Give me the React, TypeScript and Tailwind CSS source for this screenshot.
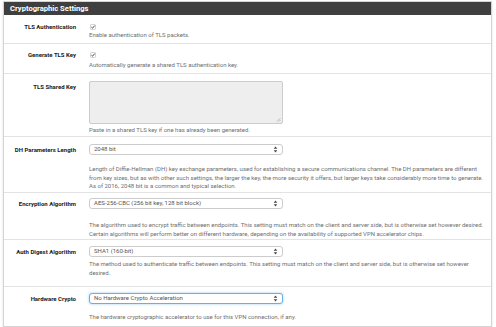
import React from 'react'

const font = { fontFamily: 'Roboto, "Liberation Sans", sans-serif' }

const Check = () => (
  <svg width="6" height="6" viewBox="0 0 6 6" className="block">
    <rect x="0.5" y="0.5" width="5" height="5" rx="0.8" fill="#fff" stroke="#b5b5b5" strokeWidth="0.6" />
    <path d="M1.4 3.1 L2.5 4.2 L4.7 1.6" fill="none" stroke="#333" strokeWidth="0.9" />
  </svg>
)

const Arrows = () => (
  <svg width="5" height="7" viewBox="0 0 5 7" className="block">
    <path d="M2.5 0.6 L4.3 2.8 H0.7 Z" fill="#444" />
    <path d="M2.5 6.4 L4.3 4.2 H0.7 Z" fill="#444" />
  </svg>
)

const Select = ({ value, focused }: { value: string; focused?: boolean }) => (
  <div
    className={
      focused
        ? 'flex h-[11px] w-[194px] items-center justify-between rounded-[3px] border border-[#66afe9] bg-white pl-[4px] pr-[4px] text-[6px] text-[#555] shadow-[0_0_3px_rgba(102,175,233,0.6)]'
        : 'flex h-[11px] w-[194px] items-center justify-between rounded-[3px] border border-[#ccc] bg-white pl-[4px] pr-[4px] text-[6px] text-[#555]'
    }
  >
    <span>{value}</span>
    <Arrows />
  </div>
)

const Row = ({
  label,
  h,
  pt,
  last,
  children,
}: {
  label: string
  h: string
  pt: string
  last?: boolean
  children: React.ReactNode
}) => (
  <div className={`flex ${h} ${pt} ${last ? '' : 'border-b border-[#e3e3e3]'}`}>
    <div className="flex h-[11px] w-[72px] shrink-0 items-center justify-end text-[6px] font-bold text-[#1a1a1a]">
      {label}
    </div>
    <div className="ml-[13px] w-[400px] text-[6px] leading-[8.5px] text-[#6f6f6f]">{children}</div>
  </div>
)

export default function App() {
  return (
    <div className="h-[327px] w-[496px] overflow-hidden bg-white pl-[3px] pt-[1px]" style={font}>
      <div className="w-[489px] border border-[#d4d4d4] bg-white shadow-[0_1px_2px_rgba(0,0,0,0.12)]">
        <div className="flex h-[13px] items-center bg-[#3f3f3f] pl-[6px] text-[7.6px] font-bold text-white">
          Cryptographic Settings
        </div>

        <Row label="TLS Authentication" h="h-[29px]" pt="pt-[6px]">
          <div className="flex h-[11px] items-center pl-[1px]">
            <Check />
          </div>
          <div className="-mt-[1px]">Enable authentication of TLS packets.</div>
        </Row>

        <Row label="Generate TLS Key" h="h-[30px]" pt="pt-[5px]">
          <div className="flex h-[11px] items-center pl-[1px]">
            <Check />
          </div>
          <div className="mt-[1px]">Automatically generate a shared TLS authentication key.</div>
        </Row>

        <Row label="TLS Shared Key" h="h-[63px]" pt="pt-[7px]">
          <div className="relative h-[43px] w-[194px] rounded-[2px] border border-[#ccc] bg-[#eee]">
            <svg width="5" height="5" viewBox="0 0 5 5" className="absolute bottom-[1px] right-[1px]">
              <path d="M1 4.5 L4.5 1 M3 4.5 L4.5 3" stroke="#999" strokeWidth="0.6" />
            </svg>
          </div>
          <div className="mt-[2px]">Paste in a shared TLS key if one has already been generated.</div>
        </Row>

        <Row label="DH Parameters Length" h="h-[56px]" pt="pt-[7px]">
          <Select value="2048 bit" />
          <div className="mt-[10px] pr-[2px]">
            Length of Diffie-Hellman (DH) key exchange parameters, used for establishing a secure communications
            channel. The DH parameters are different from key sizes, but as with other such settings, the larger the
            key, the more security it offers, but larger keys take considerably more time to generate. As of 2016, 2048
            bit is a common and typical selection.
          </div>
        </Row>

        <Row label="Encryption Algorithm" h="h-[47px]" pt="pt-[5px]">
          <Select value="AES-256-CBC (256 bit key, 128 bit block)" />
          <div className="mt-[12px]">
            The algorithm used to encrypt traffic between endpoints. This setting must match on the client and server
            side, but is otherwise set however desired. Certain algorithms will perform better on different hardware,
            depending on the availability of supported VPN accelerator chips.
          </div>
        </Row>

        <Row label="Auth Digest Algorithm" h="h-[47px]" pt="pt-[6px]">
          <Select value="SHA1 (160-bit)" />
          <div className="mt-[3px]">
            The method used to authenticate traffic between endpoints. This setting must match on the client and server
            side, but is otherwise set however
            <br />
            desired.
          </div>
        </Row>

        <Row label="Hardware Crypto" h="h-[39px]" pt="pt-[6px]" last>
          <Select value="No Hardware Crypto Acceleration" focused />
          <div className="mt-[9px]">The hardware cryptographic accelerator to use for this VPN connection, if any.</div>
        </Row>
      </div>
    </div>
  )
}
